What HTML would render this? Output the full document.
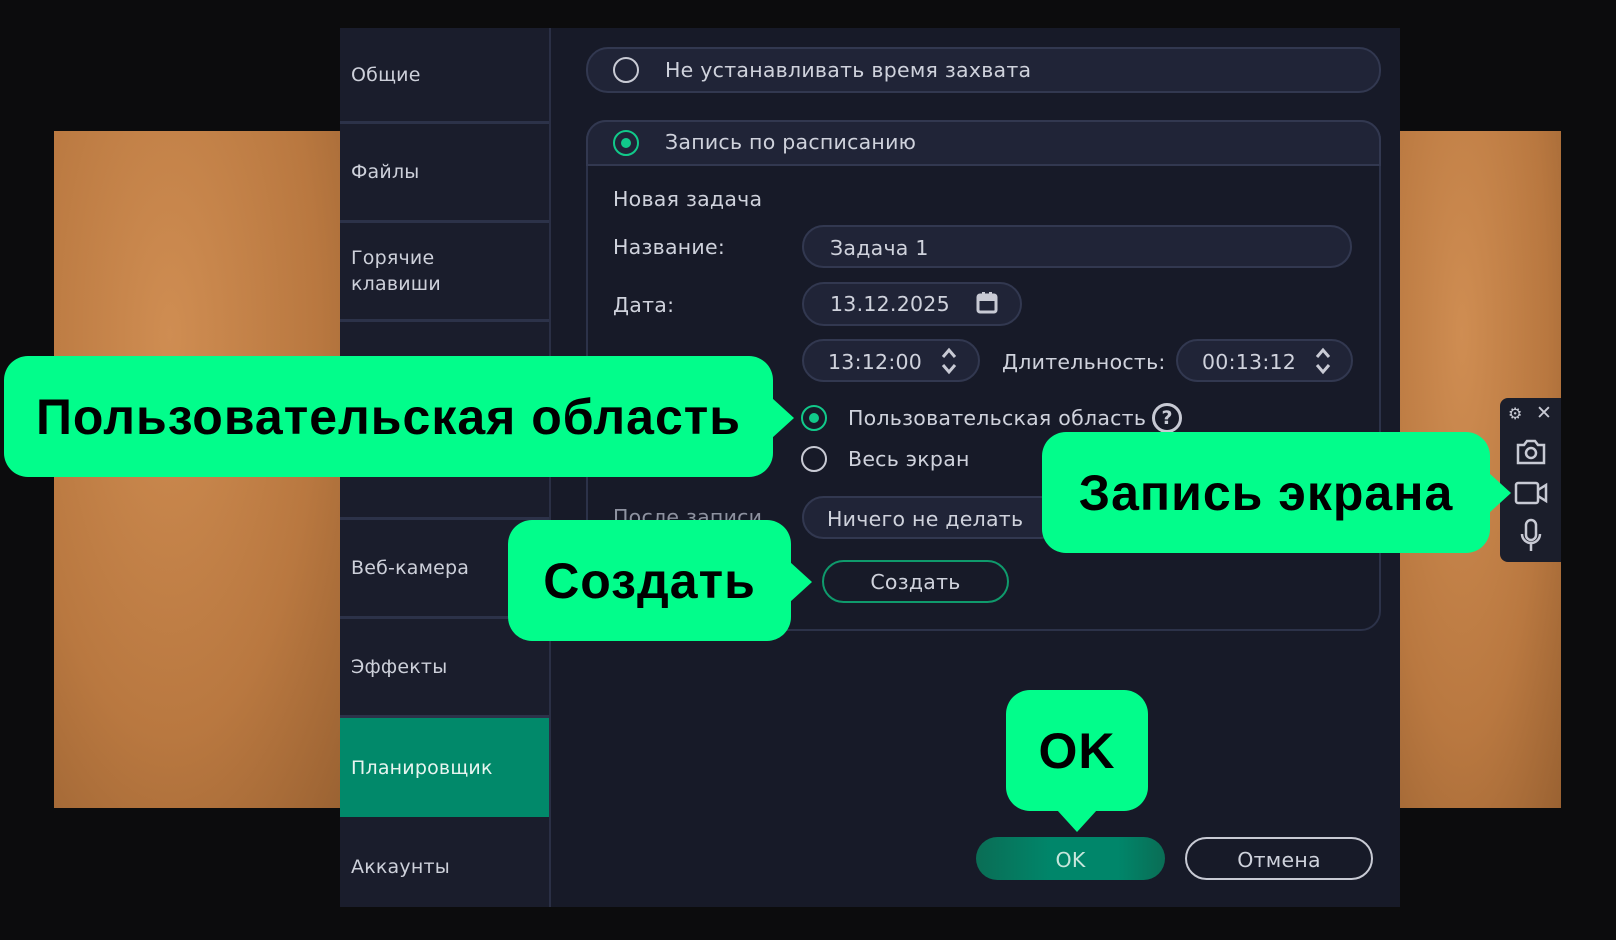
<!DOCTYPE html>
<html><head><meta charset="utf-8"><style>
*{margin:0;padding:0;box-sizing:border-box}
body{width:1616px;height:940px;background:#0c0c0d;position:relative;overflow:hidden;font-family:"DejaVu Sans","Liberation Sans",sans-serif;color:#d6d8e2}
.abs{position:absolute}
.orange{background:radial-gradient(ellipse at 40% 30%,#cf8d52,#b97840 60%,#9a6232)}
.dlg{left:340px;top:28px;width:1060px;height:879px;background:#171a28}
.side{left:340px;top:28px;width:211px;height:879px;background:#1a1d2c;border-right:2px solid #2a2f45}
.item{position:absolute;left:0;width:209px;height:99px;border-bottom:3px solid #2c3249;font-size:19px;color:#cdd0da;padding-left:11px;display:flex;align-items:center;line-height:26px;letter-spacing:0.2px}
.pill{border:2px solid #323850;background:#202437;border-radius:22px}
.lbl{font-size:20.5px;letter-spacing:0.25px;color:#cfd2dc;position:absolute}
.radio{position:absolute;width:26px;height:26px;border-radius:50%;border:2px solid #c8cad4}
.radio.on{border-color:#11c98a}
.radio.on::after{content:"";position:absolute;left:6px;top:6px;width:10px;height:10px;border-radius:50%;background:#11c98a}
.call{position:absolute;background:#02fd8b;border-radius:24px;color:#000;font-family:"Liberation Sans",sans-serif;font-weight:bold;display:flex;align-items:center;justify-content:center;letter-spacing:1px}
.tri{position:absolute;width:0;height:0}
</style></head><body>
<div class="abs orange" style="left:54px;top:131px;width:290px;height:677px"></div>
<div class="abs orange" style="left:1396px;top:131px;width:165px;height:677px"></div>
<div class="abs dlg"></div>
<div class="abs side">
 <div class="item" style="top:0;height:96px">Общие</div>
 <div class="item" style="top:96px">Файлы</div>
 <div class="item" style="top:195px">Горячие<br>клавиши</div>
 <div class="item" style="top:294px"></div>
 <div class="item" style="top:393px"></div>
 <div class="item" style="top:492px">Веб-камера</div>
 <div class="item" style="top:591px">Эффекты</div>
 <div class="item" style="top:690px;height:99px;background:#01896a;color:#e8f5f0;border-bottom:none">Планировщик</div>
 <div class="item" style="top:789px;height:90px;border-bottom:none;padding-top:10px">Аккаунты</div>
</div>
<div class="abs pill" style="left:586px;top:47px;width:795px;height:46px"></div>
<div class="radio" style="left:613px;top:57px"></div>
<div class="lbl" style="left:665px;top:58px">Не устанавливать время захвата</div>
<div class="abs" style="left:586px;top:120px;width:795px;height:511px;border:2px solid #2c3249;border-radius:20px"></div>
<div class="abs" style="left:586px;top:120px;width:795px;height:46px;background:#202437;border:2px solid #323850;border-radius:20px 20px 0 0"></div>
<div class="radio on" style="left:613px;top:130px"></div>
<div class="lbl" style="left:665px;top:130px">Запись по расписанию</div>
<div class="lbl" style="left:613px;top:187px">Новая задача</div>
<div class="lbl" style="left:613px;top:235px">Название:</div>
<div class="abs pill" style="left:802px;top:225px;width:550px;height:43px"></div>
<div class="lbl" style="left:830px;top:236px">Задача 1</div>
<div class="lbl" style="left:613px;top:293px">Дата:</div>
<div class="abs pill" style="left:802px;top:282px;width:220px;height:44px"></div>
<div class="lbl" style="left:830px;top:292px">13.12.2025</div>
<svg class="abs" style="left:976px;top:292px" width="22" height="22" viewBox="0 0 22 22"><rect x="2" y="3" width="18" height="17" rx="2" fill="none" stroke="#c8cad4" stroke-width="3"/><rect x="2" y="3" width="18" height="6" fill="#c8cad4"/><rect x="6" y="0" width="3" height="4" fill="#c8cad4"/><rect x="13" y="0" width="3" height="4" fill="#c8cad4"/></svg>
<div class="abs pill" style="left:802px;top:339px;width:178px;height:43px"></div>
<div class="lbl" style="left:828px;top:350px">13:12:00</div>
<svg class="abs" style="left:940px;top:346px" width="18" height="30" viewBox="0 0 18 30"><path d="M3 11 9 4 15 11M3 19 9 26 15 19" fill="none" stroke="#c8cad4" stroke-width="3"/></svg>
<div class="lbl" style="left:1002px;top:350px">Длительность:</div>
<div class="abs pill" style="left:1176px;top:339px;width:177px;height:43px"></div>
<div class="lbl" style="left:1202px;top:350px">00:13:12</div>
<svg class="abs" style="left:1314px;top:346px" width="18" height="30" viewBox="0 0 18 30"><path d="M3 11 9 4 15 11M3 19 9 26 15 19" fill="none" stroke="#c8cad4" stroke-width="3"/></svg>
<div class="radio on" style="left:801px;top:405px"></div>
<div class="lbl" style="left:848px;top:406px">Пользовательская область</div>
<div class="abs" style="left:1152px;top:403px;width:30px;height:30px;border:3px solid #c8cad4;border-radius:50%;font-size:19px;font-weight:bold;text-align:center;line-height:24px;color:#c8cad4">?</div>
<div class="radio" style="left:801px;top:446px"></div>
<div class="lbl" style="left:848px;top:447px">Весь экран</div>
<div class="lbl" style="left:613px;top:505px;color:#8e92a0">После записи</div>
<div class="abs pill" style="left:802px;top:496px;width:260px;height:43px"></div>
<div class="lbl" style="left:827px;top:507px">Ничего не делать</div>
<div class="abs" style="left:822px;top:560px;width:187px;height:43px;border:2px solid #0f9a6c;border-radius:22px"></div>
<div class="lbl" style="left:822px;top:570px;width:187px;text-align:center">Создать</div>
<div class="abs" style="left:976px;top:837px;width:189px;height:43px;border-radius:22px;background:linear-gradient(90deg,#0a6d55,#00866a 40%,#00866a 75%,#0a6d55)"></div>
<div class="lbl" style="left:976px;top:848px;width:189px;text-align:center;color:#c7e6dc">OK</div>
<div class="abs" style="left:1185px;top:837px;width:188px;height:43px;border:2px solid #c8cad4;border-radius:22px"></div>
<div class="lbl" style="left:1185px;top:848px;width:188px;text-align:center">Отмена</div>
<div class="abs" style="left:1500px;top:398px;width:61px;height:164px;background:#1b1e2b;border-radius:8px 0 0 8px"></div>
<div class="abs" style="left:1508px;top:404px;font-size:16px;color:#c8cad4">⚙</div>
<div class="abs" style="left:1536px;top:402px;font-size:19px;color:#c8cad4">✕</div>
<svg class="abs" style="left:1515px;top:438px" width="32" height="28" viewBox="0 0 32 28"><path d="M3 7h6l3-4h8l3 4h6v18H3z" fill="none" stroke="#c8cad4" stroke-width="2.5"/><circle cx="16" cy="15" r="5" fill="none" stroke="#c8cad4" stroke-width="2.5"/></svg>
<svg class="abs" style="left:1514px;top:480px" width="34" height="26" viewBox="0 0 34 26"><rect x="2" y="3" width="22" height="20" rx="2" fill="none" stroke="#c8cad4" stroke-width="2.5"/><path d="M24 10l8-5v16l-8-5" fill="none" stroke="#c8cad4" stroke-width="2.5"/></svg>
<svg class="abs" style="left:1518px;top:518px" width="26" height="36" viewBox="0 0 26 36"><rect x="8" y="2" width="10" height="20" rx="5" fill="none" stroke="#c8cad4" stroke-width="2.5"/><path d="M4 16a9 9 0 0 0 18 0M13 25v8" fill="none" stroke="#c8cad4" stroke-width="2.5"/></svg>
<div class="call" style="left:4px;top:356px;width:769px;height:121px;font-size:50px">Пользовательская область</div>
<div class="tri" style="left:772px;top:398px;border-top:20px solid transparent;border-bottom:20px solid transparent;border-left:22px solid #02fd8b"></div>
<div class="call" style="left:508px;top:520px;width:283px;height:121px;font-size:50px">Создать</div>
<div class="tri" style="left:790px;top:562px;border-top:20px solid transparent;border-bottom:20px solid transparent;border-left:22px solid #02fd8b"></div>
<div class="call" style="left:1042px;top:432px;width:448px;height:121px;font-size:50px">Запись экрана</div>
<div class="tri" style="left:1489px;top:473px;border-top:20px solid transparent;border-bottom:20px solid transparent;border-left:22px solid #02fd8b"></div>
<div class="call" style="left:1006px;top:690px;width:142px;height:121px;font-size:50px">OK</div>
<div class="tri" style="left:1057px;top:810px;border-left:20px solid transparent;border-right:20px solid transparent;border-top:22px solid #02fd8b"></div>
</body></html>
